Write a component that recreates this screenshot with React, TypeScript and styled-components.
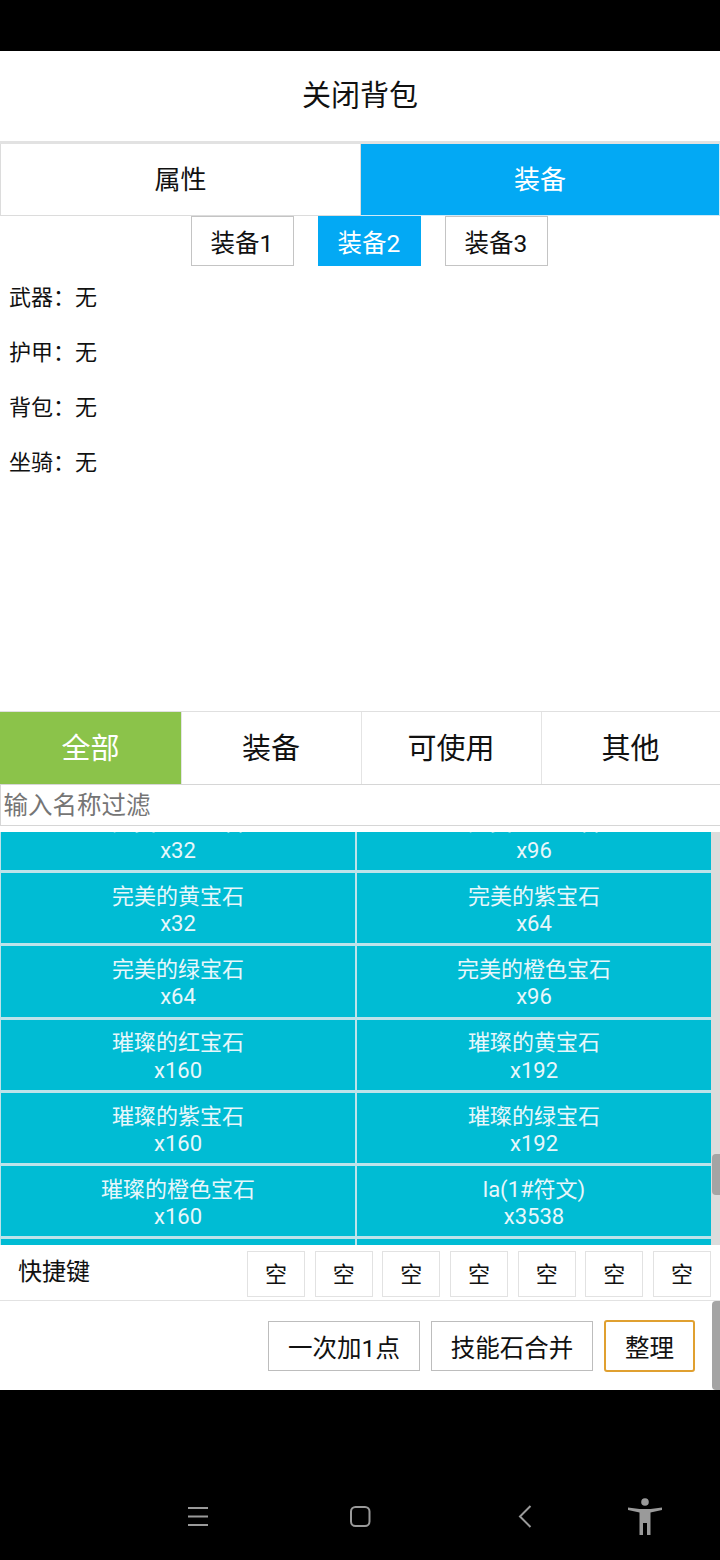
import { FC } from 'react';
import styled, { createGlobalStyle } from 'styled-components';

const GlobalStyle = createGlobalStyle`
   html, body {
      margin: 0;
      padding: 0;
      background: #000;
   }
   body {
      font-family: Roboto, 'Noto Sans CJK SC', sans-serif;
   }
   * {
      box-sizing: border-box;
   }
`;

const EQUIP_SLOTS = ['武器', '护甲', '背包', '坐骑'];
const CATEGORIES = ['全部', '装备', '可使用', '其他'];
const SHORTCUTS = Array.from({ length: 7 }, () => '空');

const ITEMS = [
   { name: '完美的红宝石', count: 32 },
   { name: '完美的蓝宝石', count: 96 },
   { name: '完美的黄宝石', count: 32 },
   { name: '完美的紫宝石', count: 64 },
   { name: '完美的绿宝石', count: 64 },
   { name: '完美的橙色宝石', count: 96 },
   { name: '璀璨的红宝石', count: 160 },
   { name: '璀璨的黄宝石', count: 192 },
   { name: '璀璨的紫宝石', count: 160 },
   { name: '璀璨的绿宝石', count: 192 },
   { name: '璀璨的橙色宝石', count: 160 },
   { name: 'la(1#符文)', count: 3538 },
];

const App: FC = () => (
   <>
      <GlobalStyle />
      <Screen>
         <StatusBar />
         <Page>
            <CloseBar>关闭背包</CloseBar>
            <MainTabs>
               <MainTab>属性</MainTab>
               <MainTab $active>装备</MainTab>
            </MainTabs>
            <SetTabs>
               <SetTab>装备1</SetTab>
               <SetTab $active>装备2</SetTab>
               <SetTab>装备3</SetTab>
            </SetTabs>
            <SlotList>
               {EQUIP_SLOTS.map((slot) => (
                  <Slot key={slot}>{slot}：无</Slot>
               ))}
            </SlotList>
            <CategoryTabs>
               {CATEGORIES.map((category, i) => (
                  <CategoryTab key={category} $active={i === 0}>
                     {category}
                  </CategoryTab>
               ))}
            </CategoryTabs>
            <FilterInput placeholder="输入名称过滤" />
            <ListWrap>
               <ListClip>
                  <ItemGrid>
                     {ITEMS.map((item) => (
                        <Item key={item.name}>
                           <span>{item.name}</span>
                           <span>x{item.count}</span>
                        </Item>
                     ))}
                     <Item />
                     <Item />
                  </ItemGrid>
               </ListClip>
               <ScrollTrack>
                  <ScrollThumb />
               </ScrollTrack>
            </ListWrap>
            <ShortcutBar>
               <ShortcutLabel>快捷键</ShortcutLabel>
               <ShortcutKeys>
                  {SHORTCUTS.map((key, i) => (
                     <ShortcutKey key={i}>{key}</ShortcutKey>
                  ))}
               </ShortcutKeys>
            </ShortcutBar>
            <ActionBar>
               <ActionButton $width={152}>一次加1点</ActionButton>
               <ActionButton $width={162}>技能石合并</ActionButton>
               <ActionButton $width={91} $focused>
                  整理
               </ActionButton>
               <ActionThumb />
            </ActionBar>
         </Page>
         <NavBar>
            <NavIcon width="24" height="22" viewBox="0 0 24 22" $left={186} $bottom={32}>
               <path d="M2 2h20M2 10.500h20M2 19h20" stroke="#9a9a9a" strokeWidth="2" fill="none" />
            </NavIcon>
            <NavIcon width="24" height="24" viewBox="0 0 24 24" $left={348} $bottom={32}>
               <rect x="3" y="3" width="18.500" height="19" rx="4.500" stroke="#9a9a9a" strokeWidth="2" fill="none" />
            </NavIcon>
            <NavIcon width="16" height="24" viewBox="0 0 16 24" $left={517} $bottom={32}>
               <path d="M13.500 2 3 12.500 13.500 23" stroke="#9a9a9a" strokeWidth="2" fill="none" />
            </NavIcon>
            <NavIcon width="36" height="40" viewBox="0 0 36 40" $left={627} $bottom={23}>
               <circle cx="18" cy="5" r="3.800" fill="#9a9a9a" />
               <path
                  d="M1 10.500 12.500 12h11L35 10.500V13l-11.500 2.500V38H20V26h-4v12h-3.500V15.500L1 13z"
                  fill="#9a9a9a"
               />
            </NavIcon>
         </NavBar>
      </Screen>
   </>
);

export default App;

// Styled Components
const Screen = styled.div`
   display: flex;
   flex-direction: column;
   width: 720px;
   height: 1560px;
   overflow: hidden;
   background: #000;
`;

const StatusBar = styled.div`
   flex: 0 0 51px;
   background: #000;
`;

const Page = styled.div`
   display: flex;
   flex-direction: column;
   flex: 0 0 1339px;
   background: #fff;
   color: #111;
`;

const CloseBar = styled.div`
   flex: 0 0 90px;
   display: flex;
   align-items: center;
   justify-content: center;
   font-size: 29px;
   padding-bottom: 6px;
`;

const MainTabs = styled.div`
   flex: 0 0 75px;
   display: grid;
   grid-template-columns: 361px 359px;
   border-top: 3px solid #e2e2e2;
`;

const MainTab = styled.div<{ $active?: boolean }>`
   display: flex;
   align-items: center;
   justify-content: center;
   padding-bottom: 4px;
   font-size: 26px;
   color: ${(p) => (p.$active ? '#fff' : '#111')};
   background: ${(p) => (p.$active ? '#03a9f4' : '#fff')};
   border-style: solid;
   border-width: ${(p) => (p.$active ? '0 1px 1px 0' : '0 1px 1px 1px')};
   border-color: ${(p) => (p.$active ? '#cfe9f7' : '#dcdcdc')};
`;

const SetTabs = styled.div`
   flex: 0 0 51px;
   display: flex;
   justify-content: center;
   gap: 24px;
   padding: 0 0 1px 18px;
`;

const SetTab = styled.div<{ $active?: boolean }>`
   width: 103px;
   display: flex;
   align-items: center;
   justify-content: center;
   font-size: 24.500px;
   color: ${(p) => (p.$active ? '#fff' : '#111')};
   background: ${(p) => (p.$active ? '#03a9f4' : '#fff')};
   border: 1px solid ${(p) => (p.$active ? '#03a9f4' : '#c4c4c4')};
`;

const SlotList = styled.div`
   flex: 0 0 444px;
   display: flex;
   flex-direction: column;
   gap: 25px;
   padding: 16px 0 0 9px;
`;

const Slot = styled.div`
   font-size: 22px;
   line-height: 30px;
`;

const CategoryTabs = styled.div`
   flex: 0 0 74px;
   display: grid;
   grid-template-columns: 181px 180px 180px 179px;
   border-top: 1px solid #e0e0e0;
   border-bottom: 1px solid #d6d6d6;
`;

const CategoryTab = styled.div<{ $active?: boolean }>`
   display: flex;
   align-items: center;
   justify-content: center;
   padding: 0 1px 4px 0;
   font-size: 29px;
   color: ${(p) => (p.$active ? '#fff' : '#111')};
   background: ${(p) => (p.$active ? '#8bc34a' : '#fff')};
   border-left: 1px solid ${(p) => (p.$active ? '#8bc34a' : '#e4e4e4')};
`;

const FilterInput = styled.input`
   flex: 0 0 41px;
   width: 100%;
   padding: 0 2.500px;
   margin: 0 0 6px;
   font-family: inherit;
   font-size: 24.500px;
   background: #fff;
   border: 1px solid #d6d6d6;
   border-width: 0 0 1px 1px;
   border-radius: 0;
   outline: none;

   &::placeholder {
      color: #757575;
   }
`;

const ListWrap = styled.div`
   flex: 0 0 413px;
   display: flex;
   min-height: 0;
`;

const ListClip = styled.div`
   flex: 1;
   min-width: 0;
   overflow: hidden;
`;

/* the list is shown scrolled, so its first row starts above the clip */
const ItemGrid = styled.div`
   display: grid;
   grid-template-columns: 1fr 1fr;
   gap: 3px 2px;
   margin-top: -32.300px;
   padding-left: 1px;
   background: #bde3ea;
`;

const Item = styled.div`
   height: 70.300px;
   display: flex;
   flex-direction: column;
   align-items: center;
   justify-content: center;
   padding-top: 4px;
   font-size: 22px;
   line-height: 27.500px;
   color: #e8f7fb;
   background: #00bcd4;
`;

const ScrollTrack = styled.div`
   position: relative;
   flex: 0 0 9px;
   background: #dcdcdc;
`;

const ScrollThumb = styled.div`
   position: absolute;
   top: 322px;
   right: 0;
   width: 8px;
   height: 41px;
   background: #a4a4a4;
   border-radius: 4px 0 0 4px;
`;

const ShortcutBar = styled.div`
   flex: 0 0 56px;
   display: flex;
   align-items: center;
   justify-content: space-between;
   padding: 6px 9px 3px 18px;
   border-bottom: 1px solid #e2e2e2;
`;

const ShortcutLabel = styled.div`
   font-size: 24px;
   padding-bottom: 10px;
`;

const ShortcutKeys = styled.div`
   display: flex;
   gap: 9.670px;
`;

const ShortcutKey = styled.div`
   width: 58px;
   height: 46px;
   display: flex;
   align-items: center;
   justify-content: center;
   padding-bottom: 4px;
   font-size: 22px;
   border: 1px solid #e2e2e2;
`;

const ActionBar = styled.div`
   position: relative;
   flex: 1;
   display: flex;
   align-items: center;
   justify-content: flex-end;
   gap: 11px;
   padding: 1px 25px 0 0;
`;

const ActionButton = styled.div<{ $width: number; $focused?: boolean }>`
   width: ${(p) => p.$width}px;
   height: ${(p) => (p.$focused ? '52px' : '50px')};
   display: flex;
   align-items: center;
   justify-content: center;
   font-size: 24.500px;
   border: ${(p) => (p.$focused ? '2px solid #e0a030' : '1px solid #bdbdbd')};
   border-radius: ${(p) => (p.$focused ? '3px' : '0')};
`;

const ActionThumb = styled.div`
   position: absolute;
   top: 0;
   right: 0;
   width: 8px;
   height: 89px;
   background: #a4a4a4;
   border-radius: 4px 0 0 4px;
`;

const NavBar = styled.div`
   position: relative;
   flex: 1;
   background: #000;
`;

const NavIcon = styled.svg<{ $left: number; $bottom: number }>`
   position: absolute;
   left: ${(p) => p.$left}px;
   bottom: ${(p) => p.$bottom}px;
`;
